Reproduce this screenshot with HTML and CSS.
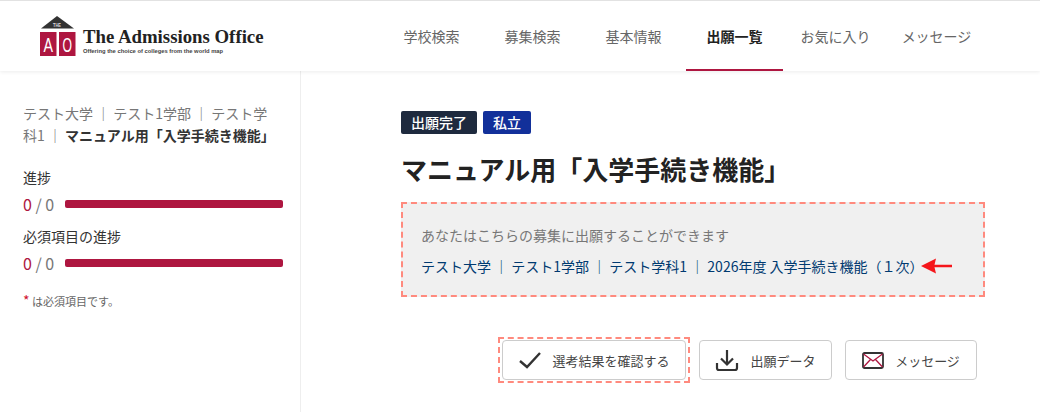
FILE: index.html
```html
<!DOCTYPE html>
<html lang="ja">
<head>
  <meta charset="UTF-8">
  <meta name="viewport" content="width=device-width, initial-scale=1.0">
  <title>The Admissions Office</title>
  <link rel="stylesheet" href="styles.css">
</head>
<body>

  <header class="header">
    <div class="logo">
      <svg class="logo-mark" width="36" height="41" viewBox="0 0 36 41">
        <polygon points="17,0 34,12.500 1,12.500" fill="#333"/>
        <rect x="0" y="16" width="16.500" height="24" fill="#ae1640"/>
        <rect x="19" y="16" width="16.500" height="24" fill="#ae1640"/>
        <text x="13" y="10.500" class="logo-the" textLength="8" lengthAdjust="spacingAndGlyphs">THE</text>
        <text x="3.500" y="36" class="logo-letter" textLength="9.500" lengthAdjust="spacingAndGlyphs">A</text>
        <text x="22.500" y="36" class="logo-letter" textLength="9.500" lengthAdjust="spacingAndGlyphs">O</text>
      </svg>
      <div class="logo-text">
        <div class="logo-name">The Admissions Office</div>
        <div class="logo-sub">Offering the choice of colleges from the world map</div>
      </div>
    </div>
    <nav class="nav">
      <a class="nav-item">学校検索</a>
      <a class="nav-item">募集検索</a>
      <a class="nav-item">基本情報</a>
      <a class="nav-item active">出願一覧</a>
      <a class="nav-item">お気に入り</a>
      <a class="nav-item">メッセージ</a>
    </nav>
  </header>

  <div class="page">
    <aside class="sidebar">
      <p class="crumbs">テスト大学 ｜ テスト1学部 ｜ テスト学科1 ｜ <strong>マニュアル用「入学手続き機能」</strong></p>

      <div class="progress-title first">進捗</div>
      <div class="progress-row">
        <span class="count"><em>0</em> / 0</span>
        <div class="bar"></div>
      </div>

      <div class="progress-title">必須項目の進捗</div>
      <div class="progress-row">
        <span class="count"><em>0</em> / 0</span>
        <div class="bar"></div>
      </div>

      <p class="note"><span class="star">*</span> は必須項目です。</p>
    </aside>

    <main class="content">
      <div class="badges">
        <span class="badge dark">出願完了</span>
        <span class="badge blue">私立</span>
      </div>
      <h1 class="title">マニュアル用「入学手続き機能」</h1>

      <div class="notice">
        <p class="notice-text">あなたはこちらの募集に出願することができます</p>
        <div class="notice-link">
          <a>テスト大学 ｜ テスト1学部 ｜ テスト学科1 ｜ 2026年度 入学手続き機能（１次）</a>
          <svg class="arrow" width="31" height="16" viewBox="0 0 31 16">
            <polygon points="0,8 15,0.500 13.500,6.700 31,6.700 31,9.300 13.500,9.300 15,15.500" fill="#f5161b"/>
          </svg>
        </div>
      </div>

      <div class="actions">
        <div class="highlight">
          <button class="action check-button">
            <svg width="24" height="18" viewBox="0 0 24 18"><path d="M2 10l7 6L22 2" fill="none" stroke="#333" stroke-width="2.400"/></svg>
            選考結果を確認する
          </button>
        </div>
        <button class="action data-button">
          <svg width="24" height="24" viewBox="0 0 24 24"><path d="M12 2v14M6 10.500l6 6 6-6M2 15v5a2 2 0 0 0 2 2h16a2 2 0 0 0 2-2v-5" fill="none" stroke="#333" stroke-width="2.200"/></svg>
          出願データ
        </button>
        <button class="action mail-button">
          <svg width="22" height="17" viewBox="0 0 22 17"><rect x="1" y="1" width="20" height="15" rx="1.500" fill="none" stroke="#333" stroke-width="1.800"/><path d="M1.500 2l9.500 7 9.500-7M1.500 15l7-7.500M20.500 15l-7-7.500" fill="none" stroke="#ae1640" stroke-width="1.300"/></svg>
          メッセージ
        </button>
      </div>
    </main>
  </div>

</body>
</html>
```

FILE: styles.css
```css
* {
  box-sizing: border-box;
}
body {
  margin: 0;
  height: 412px;
  overflow: hidden;
  background-color: #fff;
  color: #333;
  font-family: 'Noto Sans CJK JP', 'Noto Sans', sans-serif;
  font-size: 14px;
}
.header {
  display: flex;
  justify-content: space-between;
  height: 71px;
  padding: 15px 55px 0 40px;
  border-top: 1px solid #e2e2e2;
  box-shadow: 0 1px 4px rgba(0, 0, 0, 0.08);
  position: relative;
}
.logo {
  display: flex;
  gap: 7px;
}
.logo-mark {
  overflow: visible;
}
.logo-the {
  font-family: 'Liberation Sans', sans-serif;
  font-size: 6px;
  font-weight: bold;
  fill: #ddd;
}
.logo-letter {
  font-family: 'Liberation Sans', sans-serif;
  font-size: 21px;
  fill: #fff;
}
.logo-text {
  padding-top: 11px;
}
.logo-name {
  font-family: 'Liberation Serif', serif;
  font-size: 18.800px;
  font-weight: bold;
  line-height: 20px;
  color: #222;
  white-space: nowrap;
}
.logo-sub {
  font-family: 'Liberation Sans', sans-serif;
  font-size: 5.800px;
  font-weight: bold;
  line-height: 8px;
  color: #444;
  white-space: nowrap;
}
.nav {
  display: flex;
  gap: 4px;
  margin-top: -15px;
}
.nav-item {
  width: 97px;
  height: 70px;
  padding-top: 24px;
  text-align: center;
  color: #666;
  line-height: 22px;
  white-space: nowrap;
}
.nav-item.active {
  color: #222;
  font-weight: bold;
  border-bottom: 2px solid #ae1640;
}
.page {
  display: flex;
  height: 341px;
}
.sidebar {
  width: 301px;
  padding: 31px 17px 0 23px;
  border-right: 1px solid #eee;
}
.crumbs {
  max-width: 254px;
  margin: 0 0 21px;
  color: #777;
  line-height: 22px;
}
.crumbs strong {
  color: #333;
}
.progress-title {
  margin-top: 12px;
  line-height: 20px;
  color: #333;
}
.progress-title.first {
  margin-top: 0;
}
.progress-row {
  display: flex;
  align-items: center;
  gap: 11px;
  margin-top: 7px;
  height: 20px;
}
.count {
  color: #777;
  white-space: nowrap;
  font-size: 16px;
}
.count em {
  color: #ae1640;
  font-style: normal;
}
.bar {
  flex: 1;
  height: 8px;
  border-radius: 2px;
  background-color: #ae1640;
}
.note {
  margin: 18px 0 0;
  font-size: 11px;
  line-height: 18px;
  color: #666;
}
.star {
  color: #d0122f;
  font-size: 14px;
}
.content {
  flex: 1;
  padding: 40px 55px 0 100px;
}
.badges {
  display: flex;
  gap: 6px;
}
.badge {
  height: 23px;
  padding: 0 10px;
  border-radius: 2px;
  color: #fff;
  font-size: 14px;
  font-weight: 500;
  line-height: 23px;
}
.badge.dark {
  background-color: #1e2a3e;
}
.badge.blue {
  background-color: #12309a;
}
.title {
  margin: 18px 0 0;
  color: #222;
  font-size: 26px;
  font-weight: bold;
  line-height: 34px;
}
.notice {
  height: 95px;
  margin-top: 16px;
  padding: 20px 18px 0;
  border: 2px dashed #ff8a7e;
  background-color: #f0f0f0;
}
.notice-text {
  margin: 0;
  color: #777;
  line-height: 22px;
}
.notice-link {
  display: flex;
  align-items: center;
  gap: 5px;
  margin-top: 9px;
  color: #003a70;
  line-height: 22px;
  white-space: nowrap;
}
.arrow {
  margin-left: -8px;
}
.actions {
  display: flex;
  justify-content: flex-end;
  align-items: center;
  gap: 13px;
  margin-top: 40px;
  padding-right: 8px;
}
.highlight {
  padding: 1px 2px;
  border: 2px dashed #ff8a7e;
  margin-right: -4px;
}
.action {
  display: flex;
  align-items: center;
  justify-content: center;
  height: 40px;
  padding: 0;
  background-color: #fff;
  border: 1px solid #ccc;
  border-radius: 4px;
  color: #444;
  font-family: inherit;
  font-size: 13px;
}
.check-button {
  width: 184px;
  gap: 10px;
}
.data-button {
  width: 133px;
  gap: 11px;
}
.mail-button {
  width: 132px;
  gap: 11px;
}
```
